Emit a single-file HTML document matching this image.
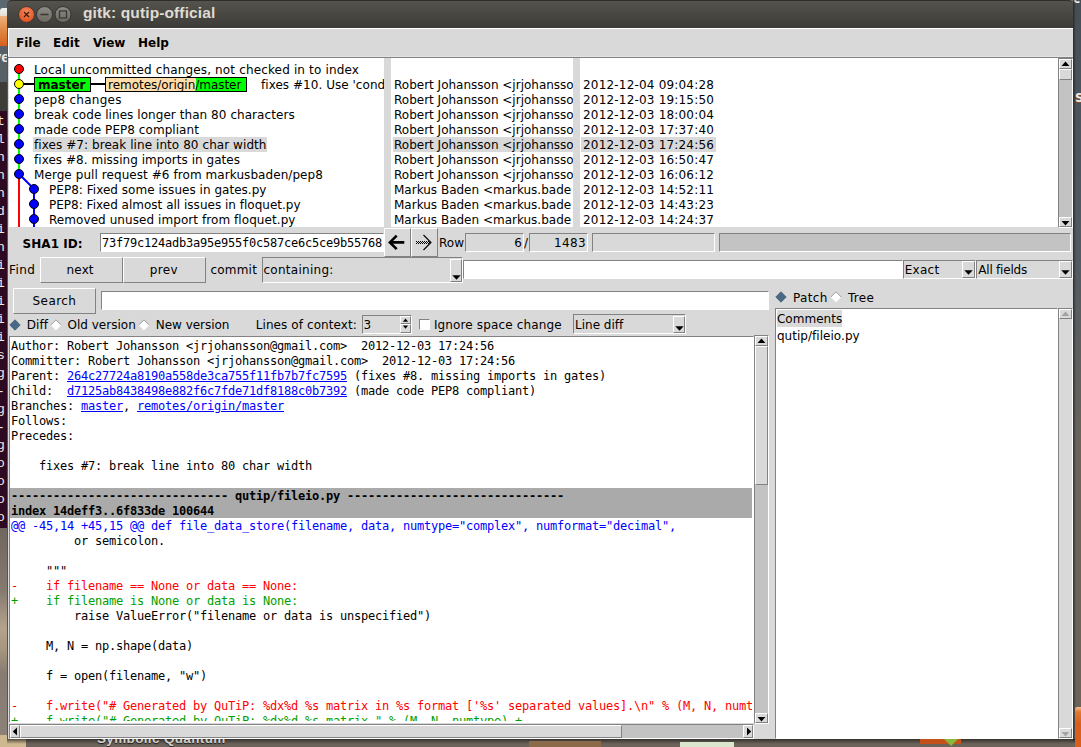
<!DOCTYPE html>
<html><head><meta charset="utf-8"><title>gitk: qutip-official</title>
<style>
html,body{margin:0;padding:0;}
body{width:1081px;height:747px;position:relative;overflow:hidden;background:#6b6257;font-family:"DejaVu Sans","Liberation Sans",sans-serif;font-size:12px;color:#000;}
.abs,#win *{position:absolute;box-sizing:border-box;white-space:pre;}
#win svg *{position:static;}
#win{position:absolute;left:7px;top:0;width:1066px;height:739px;overflow:hidden;}
#title{left:0;top:0;width:1066px;height:28px;background:linear-gradient(#55534d,#3c3b37);border-radius:5px 5px 0 0;border-top:1px solid #2f2e2b;}
#title .t{left:76px;top:3px;font:bold 15.5px "Liberation Sans",sans-serif;color:#dfdbd2;letter-spacing:0.12px;}
.ui{font:12px "DejaVu Sans","Liberation Sans",sans-serif;line-height:15px;height:15px;}
.b{font-weight:bold !important;}
.mono{font:12px "DejaVu Sans Mono","Liberation Mono",monospace;letter-spacing:-0.224px;line-height:15px;height:15px;}
.sunk{border:1px solid;border-color:#828282 #fff #fff #828282;}
.raised{border:1px solid;border-color:#fff #828282 #828282 #fff;background:#d9d9d9;}
.white{background:#fff;}
.c1{letter-spacing:0.15px;}
.c2{letter-spacing:0.0px;}
.c3{letter-spacing:0.19px;}
</style></head><body>
<div id="desk" style="position:absolute;left:0;top:0;width:1081px;height:747px;overflow:hidden;background:#6c645b;">
<div class="abs" style="left:0;top:0;width:14px;height:9px;background:#5b6872;"></div>
<div class="abs" style="left:0;top:8px;width:8px;height:8px;background:linear-gradient(#f2f2f2,#e4ddd6);border-radius:3px 0 0 0;"></div>
<div class="abs" style="left:0;top:16px;width:8px;height:30px;background:linear-gradient(#eeb27c,#e08a48 45%,#d8601e);"></div>
<div class="abs" style="left:0;top:46px;width:8px;height:36px;background:#586067;"></div>
<span class="abs" style="left:-7px;top:48px;font:bold 15px 'Liberation Sans',sans-serif;color:#e8e8e8;">ve</span>
<div class="abs" style="left:0;top:82px;width:8px;height:29px;background:#3d3c38;"></div>
<div class="abs" style="left:0;top:111px;width:8px;height:417px;background:#2d0922;"></div>
<div class="abs" style="left:0;top:528px;width:8px;height:208px;background:linear-gradient(#6f665e,#857a70 30%,#b3a28c 48%,#a8977f 58%,#877c72 70%,#8b8178);"></div>
<div class="abs" style="left:0;top:735px;width:26px;height:12px;background:#cdb88f;"></div>
<div class="abs term" style="left:0;top:111px;width:7px;height:417px;overflow:hidden;"><span class="abs" style="left:-3px;top:3px;font:13px 'Liberation Mono',monospace;color:#eeeeec;line-height:15px;">t</span><span class="abs" style="left:-3px;top:21px;font:13px 'Liberation Mono',monospace;color:#eeeeec;line-height:15px;">l</span><span class="abs" style="left:-3px;top:39px;font:13px 'Liberation Mono',monospace;color:#eeeeec;line-height:15px;">n</span><span class="abs" style="left:-3px;top:57px;font:13px 'Liberation Mono',monospace;color:#eeeeec;line-height:15px;">n</span><span class="abs" style="left:-3px;top:75px;font:13px 'Liberation Mono',monospace;color:#eeeeec;line-height:15px;">n</span><span class="abs" style="left:-3px;top:93px;font:13px 'Liberation Mono',monospace;color:#eeeeec;line-height:15px;">d</span><span class="abs" style="left:-3px;top:111px;font:13px 'Liberation Mono',monospace;color:#eeeeec;line-height:15px;">i</span><span class="abs" style="left:-3px;top:129px;font:13px 'Liberation Mono',monospace;color:#eeeeec;line-height:15px;">n</span><span class="abs" style="left:-3px;top:147px;font:13px 'Liberation Mono',monospace;color:#eeeeec;line-height:15px;">i</span><span class="abs" style="left:-3px;top:165px;font:13px 'Liberation Mono',monospace;color:#eeeeec;line-height:15px;">i</span><span class="abs" style="left:-3px;top:183px;font:13px 'Liberation Mono',monospace;color:#eeeeec;line-height:15px;">i</span><span class="abs" style="left:-3px;top:201px;font:13px 'Liberation Mono',monospace;color:#eeeeec;line-height:15px;">i</span><span class="abs" style="left:-3px;top:219px;font:13px 'Liberation Mono',monospace;color:#eeeeec;line-height:15px;">i</span><span class="abs" style="left:-3px;top:237px;font:13px 'Liberation Mono',monospace;color:#eeeeec;line-height:15px;">s</span><span class="abs" style="left:-3px;top:255px;font:13px 'Liberation Mono',monospace;color:#eeeeec;line-height:15px;">g</span><span class="abs" style="left:-3px;top:273px;font:13px 'Liberation Mono',monospace;color:#eeeeec;line-height:15px;">-</span><span class="abs" style="left:-3px;top:291px;font:13px 'Liberation Mono',monospace;color:#eeeeec;line-height:15px;">g</span><span class="abs" style="left:-3px;top:309px;font:13px 'Liberation Mono',monospace;color:#eeeeec;line-height:15px;">-</span><span class="abs" style="left:-3px;top:327px;font:13px 'Liberation Mono',monospace;color:#eeeeec;line-height:15px;">g</span><span class="abs" style="left:-3px;top:345px;font:13px 'Liberation Mono',monospace;color:#eeeeec;line-height:15px;">o</span><span class="abs" style="left:-3px;top:363px;font:13px 'Liberation Mono',monospace;color:#eeeeec;line-height:15px;">o</span><span class="abs" style="left:-3px;top:381px;font:13px 'Liberation Mono',monospace;color:#eeeeec;line-height:15px;">o</span><span class="abs" style="left:-3px;top:399px;font:13px 'Liberation Mono',monospace;color:#eeeeec;line-height:15px;">o</span></div>
<div class="abs" style="left:1073px;top:0;width:8px;height:747px;background:linear-gradient(#474f56,#525b62 35%,#6a645c 60%,#6c645b);"></div>
<span class="abs" style="left:1075px;top:91px;font:bold 12px 'DejaVu Sans',sans-serif;color:#ececec;text-shadow:-1px 1px 0 #8a4a1a;">S</span>
<span class="abs" style="left:1073px;top:-8px;font:bold 12px 'DejaVu Sans',sans-serif;color:#ececec;">c</span>
<div class="abs" style="left:1073px;top:0;width:3px;height:741px;background:linear-gradient(90deg,rgba(30,30,30,.75),rgba(30,30,30,0));"></div>
<div class="abs" style="left:1075px;top:707px;width:6px;height:40px;background:linear-gradient(#f6c090,#e07a34 12%,#d8601c 40%);border-radius:2px 0 0 0;"></div>
<div class="abs" style="left:7px;top:739px;width:1068px;height:5px;background:linear-gradient(rgba(30,28,26,.7),rgba(30,28,26,0));"></div>
<span class="abs" style="left:97px;top:731px;line-height:15px;font:bold 13.5px/15px 'Liberation Sans',sans-serif;color:#d2cdc6;text-shadow:0 1px 1px #1a1a1a;letter-spacing:0.35px;">Symbolic Quantum</span>
<div class="abs" style="left:529px;top:741px;width:72px;height:6px;background:#8a6a48;"></div>
<div class="abs" style="left:680px;top:742px;width:54px;height:5px;background:#dbe6cf;"></div>
<div class="abs" style="left:920px;top:739px;width:41px;height:5px;background:#c4511a;"></div>
<div class="abs" style="left:944px;top:739px;width:0;height:0;border-left:7px solid transparent;border-right:7px solid transparent;border-top:7px solid #8ab83a;"></div>
</div>
<div id="win">
<div id="title"><span class="t">gitk: qutip-official</span><svg style="left:9px;top:3px" width="70" height="22" viewBox="0 0 70 22"><defs><radialGradient id="rg" cx="50%" cy="35%" r="65%"><stop offset="0" stop-color="#f58a5c"/><stop offset="1" stop-color="#df4f1e"/></radialGradient><linearGradient id="gg" x1="0" y1="0" x2="0" y2="1"><stop offset="0" stop-color="#8e8c84"/><stop offset="1" stop-color="#6a6861"/></linearGradient></defs><circle cx="10.5" cy="10.5" r="8" fill="url(#rg)" stroke="#3a3935" stroke-width="1"/><path d="M8 8 L13 13 M13 8 L8 13" stroke="#3f1707" stroke-width="1.2" fill="none"/><circle cx="28.5" cy="10.5" r="8" fill="url(#gg)" stroke="#33322e" stroke-width="1"/><path d="M24.5 10.5 H32.5" stroke="#3a3935" stroke-width="1.6"/><circle cx="47" cy="10.5" r="8" fill="url(#gg)" stroke="#33322e" stroke-width="1"/><rect x="43.5" y="7" width="7" height="7" fill="none" stroke="#3a3935" stroke-width="1.3"/></svg></div>
<div class="" style="left:0px;top:28px;width:1066px;height:711px;background:#d9d9d9;"></div>
<div class="" style="left:0px;top:28px;width:1066px;height:29px;background:#d9d9d9;border-top:1px solid #fff;"></div>
<div class="" style="left:0px;top:28px;width:1px;height:711px;background:#55544f;"></div>
<div class="" style="left:1px;top:28px;width:1px;height:28px;background:#fff;"></div>
<div class="" style="left:1px;top:56px;width:1065px;height:1px;background:#e4e4e4;"></div>
<span class="ui b" style="left:9px;top:36px;">File</span>
<span class="ui b" style="left:46px;top:36px;">Edit</span>
<span class="ui b" style="left:86px;top:36px;">View</span>
<span class="ui b" style="left:131px;top:36px;">Help</span>
<div class="" style="left:1px;top:57px;width:1065px;height:1px;background:#828282;"></div>
<div class="white" style="left:2px;top:58px;width:375px;height:169px;"></div>
<div class="white" style="left:384px;top:58px;width:182px;height:169px;"></div>
<div class="white" style="left:573px;top:58px;width:478px;height:169px;"></div>
<div class="" style="left:26px;top:137px;width:234px;height:15px;background:#d9d9d9;"></div>
<div class="" style="left:386px;top:137px;width:181px;height:15px;background:#d9d9d9;"></div>
<div class="" style="left:574px;top:137px;width:135px;height:15px;background:#d9d9d9;"></div>
<svg style="left:3px;top:58px" width="60" height="169" viewBox="0 0 60 169"><path d="M9 11 V116" stroke="#00ff00" stroke-width="2" fill="none"/><path d="M9 116 V169" stroke="#ff0000" stroke-width="2" fill="none"/><path d="M9 116 L16.5 123.5 L24 131 V169" stroke="#0000ff" stroke-width="2" fill="none"/><path d="M9 26 H80" stroke="#000" stroke-width="2" fill="none"/><circle cx="9" cy="11" r="4.5" fill="#ff0000" stroke="#000" stroke-width="1"/><circle cx="9" cy="26" r="4.5" fill="#ffff00" stroke="#000" stroke-width="1"/><circle cx="9" cy="41" r="4.5" fill="#0000ff" stroke="#000" stroke-width="1"/><circle cx="9" cy="56" r="4.5" fill="#0000ff" stroke="#000" stroke-width="1"/><circle cx="9" cy="71" r="4.5" fill="#0000ff" stroke="#000" stroke-width="1"/><circle cx="9" cy="86" r="4.5" fill="#0000ff" stroke="#000" stroke-width="1"/><circle cx="9" cy="101" r="4.5" fill="#0000ff" stroke="#000" stroke-width="1"/><circle cx="9" cy="116" r="4.5" fill="#0000ff" stroke="#000" stroke-width="1"/><circle cx="24" cy="131" r="4.5" fill="#0000ff" stroke="#000" stroke-width="1"/><circle cx="24" cy="146" r="4.5" fill="#0000ff" stroke="#000" stroke-width="1"/><circle cx="24" cy="161" r="4.5" fill="#0000ff" stroke="#000" stroke-width="1"/></svg>
<span class="ui" style="left:27px;top:63px;letter-spacing:0.150px;">Local uncommitted changes, not checked in to index</span>
<span class="ui c2" style="left:387px;top:78px;">Robert Johansson &lt;jrjohansso</span>
<span class="ui c3" style="left:576px;top:78px;">2012-12-04 09:04:28</span>
<span class="ui" style="left:27px;top:93px;letter-spacing:0.270px;">pep8 changes</span>
<span class="ui c2" style="left:387px;top:93px;">Robert Johansson &lt;jrjohansso</span>
<span class="ui c3" style="left:576px;top:93px;">2012-12-03 19:15:50</span>
<span class="ui" style="left:27px;top:108px;letter-spacing:0.060px;">break code lines longer than 80 characters</span>
<span class="ui c2" style="left:387px;top:108px;">Robert Johansson &lt;jrjohansso</span>
<span class="ui c3" style="left:576px;top:108px;">2012-12-03 18:00:04</span>
<span class="ui" style="left:27px;top:123px;letter-spacing:0.050px;">made code PEP8 compliant</span>
<span class="ui c2" style="left:387px;top:123px;">Robert Johansson &lt;jrjohansso</span>
<span class="ui c3" style="left:576px;top:123px;">2012-12-03 17:37:40</span>
<span class="ui" style="left:27px;top:138px;letter-spacing:0.070px;">fixes #7: break line into 80 char width</span>
<span class="ui c2" style="left:387px;top:138px;">Robert Johansson &lt;jrjohansso</span>
<span class="ui c3" style="left:576px;top:138px;">2012-12-03 17:24:56</span>
<span class="ui" style="left:27px;top:153px;letter-spacing:0.040px;">fixes #8. missing imports in gates</span>
<span class="ui c2" style="left:387px;top:153px;">Robert Johansson &lt;jrjohansso</span>
<span class="ui c3" style="left:576px;top:153px;">2012-12-03 16:50:47</span>
<span class="ui" style="left:27px;top:168px;letter-spacing:0.070px;">Merge pull request #6 from markusbaden/pep8</span>
<span class="ui c2" style="left:387px;top:168px;">Robert Johansson &lt;jrjohansso</span>
<span class="ui c3" style="left:576px;top:168px;">2012-12-03 16:06:12</span>
<span class="ui" style="left:42px;top:183px;letter-spacing:0.030px;">PEP8: Fixed some issues in gates.py</span>
<span class="ui c2" style="left:387px;top:183px;">Markus Baden &lt;markus.bade</span>
<span class="ui c3" style="left:576px;top:183px;">2012-12-03 14:52:11</span>
<span class="ui" style="left:42px;top:198px;letter-spacing:0.010px;">PEP8: Fixed almost all issues in floquet.py</span>
<span class="ui c2" style="left:387px;top:198px;">Markus Baden &lt;markus.bade</span>
<span class="ui c3" style="left:576px;top:198px;">2012-12-03 14:43:23</span>
<span class="ui" style="left:42px;top:213px;letter-spacing:0.070px;">Removed unused import from floquet.py</span>
<span class="ui c2" style="left:387px;top:213px;">Markus Baden &lt;markus.bade</span>
<span class="ui c3" style="left:576px;top:213px;">2012-12-03 14:24:37</span>
<div class="" style="left:27px;top:77px;width:57px;height:15px;background:#00ff00;border:1px solid #000;"></div>
<span class="ui b" style="left:31px;top:78px;">master</span>
<div class="" style="left:84px;top:83px;width:14px;height:2px;background:#000;"></div>
<div class="" style="left:98px;top:77px;width:142px;height:15px;background:#ffddaa;border:1px solid #000;"></div>
<div class="" style="left:189px;top:78px;width:50px;height:13px;background:#00ff00;"></div>
<span class="ui" style="left:101px;top:78px;letter-spacing:-0.03px;">remotes/origin/master</span>
<span class="ui" style="left:254px;top:78px;letter-spacing:0.04px;">fixes #10. Use &#x27;cond</span>
<div class="" style="left:377px;top:58px;width:7px;height:170px;background:#d9d9d9;"></div>
<div class="" style="left:566px;top:58px;width:7px;height:170px;background:#d9d9d9;"></div>
<div class="sunk" style="left:1051px;top:58px;width:15px;height:170px;background:#c3c3c3;"></div>
<div class="raised" style="left:1052px;top:59px;width:13px;height:10px;"></div>
<div class="raised" style="left:1052px;top:217px;width:13px;height:10px;"></div>
<div class="raised" style="left:1052px;top:69px;width:13px;height:11px;"></div>
<svg style="left:1054px;top:61px" width="9" height="6"><path d="M0.6 5 L4.5 0.6 L8.4 5 Z" fill="#000"/></svg>
<svg style="left:1054px;top:220px" width="9" height="6"><path d="M0.6 1 L4.5 5.4 L8.4 1 Z" fill="#000"/></svg><span class="ui b" style="left:15.600000000000001px;top:237px;letter-spacing:0.03px;">SHA1 ID:</span>
<div class="sunk white" style="left:93px;top:233px;width:284px;height:19px;"></div>
<span class="mono" style="left:95px;top:236px;">73f79c124adb3a95e955f0c587ce6c5ce9b55768</span>
<div class="raised" style="left:377px;top:228px;width:27px;height:29px;"></div>
<div class="raised" style="left:404px;top:228px;width:27px;height:29px;"></div>
<svg style="left:380px;top:232px" width="22" height="20" viewBox="0 0 22 20"><path d="M2.9 10.4 H17.3 M9.7 3.6 L2.9 10.4 L9.7 17.2" stroke="#000" stroke-width="2.6" fill="none" stroke-linejoin="miter"/></svg>
<svg style="left:407px;top:232px" width="22" height="20" viewBox="0 0 22 20"><path d="M2 9.5 H15 M3 10.5 H16 M2 11.5 H15" stroke="#000" stroke-width="1" fill="none" stroke-dasharray="1 1"/><path d="M9.5 3 L17 10.5 L9.5 18" stroke="#000" stroke-width="1.1" fill="none"/></svg>
<span class="ui" style="left:432px;top:236px;">Row</span>
<div class="sunk" style="left:458px;top:233px;width:59px;height:19px;"></div>
<span class="ui" style="left:458px;top:236px;width:57px;text-align:right;">6</span>
<span class="ui" style="left:517px;top:236px;">/</span>
<div class="sunk" style="left:522px;top:233px;width:59px;height:19px;"></div>
<span class="ui" style="left:522px;top:236px;width:57px;text-align:right;letter-spacing:0.35px;">1483</span>
<div class="sunk" style="left:585px;top:233px;width:123px;height:19px;"></div>
<div class="sunk" style="left:712px;top:233px;width:352px;height:19px;background:#c3c3c3;"></div>
<span class="ui" style="left:2px;top:263px;letter-spacing:0.40px;">Find</span>
<div class="raised" style="left:33px;top:257px;width:83px;height:26px;"></div>
<span class="ui" style="left:59.599999999999994px;top:263px;letter-spacing:0.13px;">next</span>
<div class="raised" style="left:116px;top:257px;width:83px;height:26px;"></div>
<span class="ui" style="left:142.7px;top:263px;letter-spacing:0.35px;">prev</span>
<span class="ui" style="left:203.4px;top:263px;letter-spacing:0.22px;">commit</span>
<div class="sunk" style="left:255px;top:257px;width:201px;height:26px;"></div>
<span class="ui" style="left:256.5px;top:263px;letter-spacing:0.27px;">containing:</span>
<div class="raised" style="left:443px;top:259px;width:12px;height:23px;"></div>
<svg style="left:445px;top:275px" width="9" height="5" viewBox="0 0 9 5"><path d="M0.3 0.3 H8.7 L4.5 4.8 Z" fill="#000"/></svg>
<div class="sunk white" style="left:456px;top:260px;width:440px;height:19px;"></div>
<div class="sunk" style="left:896px;top:260px;width:73px;height:19px;"></div>
<span class="ui" style="left:897.7px;top:263px;letter-spacing:0.30px;">Exact</span>
<div class="raised" style="left:955px;top:261px;width:13px;height:17px;"></div>
<svg style="left:957px;top:270px" width="9" height="5" viewBox="0 0 9 5"><path d="M0.3 0.3 H8.7 L4.5 4.8 Z" fill="#000"/></svg>
<div class="sunk" style="left:969px;top:260px;width:97px;height:19px;"></div>
<span class="ui" style="left:971.3px;top:263px;letter-spacing:-0.22px;">All fields</span>
<div class="raised" style="left:1052px;top:261px;width:13px;height:17px;"></div>
<svg style="left:1054px;top:270px" width="9" height="5" viewBox="0 0 9 5"><path d="M0.3 0.3 H8.7 L4.5 4.8 Z" fill="#000"/></svg>
<div class="raised" style="left:6px;top:288px;width:83px;height:26px;"></div>
<span class="ui" style="left:25.6px;top:294px;letter-spacing:0.40px;">Search</span>
<div class="sunk white" style="left:94px;top:291px;width:668px;height:19px;"></div>
<svg style="left:768.2px;top:291.3px" width="12" height="12" viewBox="0 0 12 12"><path d="M6 0.8 L11.2 6 L6 11.2 L0.8 6 Z" fill="#4a6984" stroke="#3f5a73" stroke-width="0.8"/></svg>
<span class="ui" style="left:786px;top:291px;letter-spacing:0.35px;">Patch</span>
<svg style="left:823.0px;top:291.3px" width="12" height="12" viewBox="0 0 12 12"><path d="M6 0.8 L11.2 6 L6 11.2 L0.8 6 Z" fill="#ffffff"/><path d="M0.8 6 L6 0.8 L11.2 6" fill="none" stroke="#9a9a9a" stroke-width="1"/><path d="M0.8 6 L6 11.2 L11.2 6" fill="none" stroke="#f4f4f4" stroke-width="1"/></svg>
<span class="ui" style="left:841px;top:291px;letter-spacing:0.30px;">Tree</span>
<svg style="left:2.3px;top:318.5px" width="12" height="12" viewBox="0 0 12 12"><path d="M6 0.8 L11.2 6 L6 11.2 L0.8 6 Z" fill="#4a6984" stroke="#3f5a73" stroke-width="0.8"/></svg>
<span class="ui" style="left:19.8px;top:318px;letter-spacing:0.07px;">Diff</span>
<svg style="left:43.3px;top:318.5px" width="12" height="12" viewBox="0 0 12 12"><path d="M6 0.8 L11.2 6 L6 11.2 L0.8 6 Z" fill="#ffffff"/><path d="M0.8 6 L6 0.8 L11.2 6" fill="none" stroke="#9a9a9a" stroke-width="1"/><path d="M0.8 6 L6 11.2 L11.2 6" fill="none" stroke="#f4f4f4" stroke-width="1"/></svg>
<span class="ui" style="left:60.5px;top:318px;letter-spacing:0.01px;">Old version</span>
<svg style="left:131.2px;top:318.5px" width="12" height="12" viewBox="0 0 12 12"><path d="M6 0.8 L11.2 6 L6 11.2 L0.8 6 Z" fill="#ffffff"/><path d="M0.8 6 L6 0.8 L11.2 6" fill="none" stroke="#9a9a9a" stroke-width="1"/><path d="M0.8 6 L6 11.2 L11.2 6" fill="none" stroke="#f4f4f4" stroke-width="1"/></svg>
<span class="ui" style="left:148.8px;top:318px;letter-spacing:-0.03px;">New version</span>
<span class="ui" style="left:248.7px;top:318px;letter-spacing:0.09px;">Lines of context:</span>
<div class="sunk" style="left:355px;top:315px;width:50px;height:19px;"></div>
<span class="ui" style="left:356.6px;top:318px;">3</span>
<div class="raised" style="left:393px;top:316px;width:11px;height:8px;"></div>
<div class="raised" style="left:393px;top:324px;width:11px;height:9px;"></div>
<svg style="left:395px;top:318px" width="7" height="5"><path d="M0.9 3.8 L3.5 0.6 L6.1 3.8 Z" fill="#000"/></svg>
<svg style="left:395px;top:325px" width="7" height="5"><path d="M0.9 0.6 L3.5 3.8 L6.1 0.6 Z" fill="#000"/></svg>
<div class="sunk white" style="left:412px;top:319px;width:11px;height:11px;"></div>
<span class="ui" style="left:426.9px;top:318px;letter-spacing:0.14px;">Ignore space change</span>
<div class="sunk" style="left:566px;top:314px;width:113px;height:20px;"></div>
<span class="ui" style="left:568.1px;top:318px;letter-spacing:-0.02px;">Line diff</span>
<div class="raised" style="left:666px;top:316px;width:12px;height:17px;"></div>
<svg style="left:667.5px;top:326px" width="9" height="5" viewBox="0 0 9 5"><path d="M0.3 0.3 H8.7 L4.5 4.8 Z" fill="#000"/></svg><div class="sunk white" style="left:2px;top:336px;width:745px;height:387px;"></div>
<div class="" style="left:3px;top:488px;width:742px;height:30px;background:#aaaaaa;"></div>
<div style="left:3px;top:337px;width:742px;height:384px;overflow:hidden;"><span class="mono" style="left:1px;top:2px;color:#000;">Author: Robert Johansson &lt;jrjohansson@gmail.com&gt;  2012-12-03 17:24:56</span>
<span class="mono" style="left:1px;top:17px;color:#000;">Committer: Robert Johansson &lt;jrjohansson@gmail.com&gt;  2012-12-03 17:24:56</span>
<span class="mono" style="left:1px;top:32px;color:#000;">Parent: <span style="position:static;color:#0000ff;text-decoration:underline">264c27724a8190a558de3ca755f11fb7b7fc7595</span> (fixes #8. missing imports in gates)</span>
<span class="mono" style="left:1px;top:47px;color:#000;">Child:  <span style="position:static;color:#0000ff;text-decoration:underline">d7125ab8438498e882f6c7fde71df8188c0b7392</span> (made code PEP8 compliant)</span>
<span class="mono" style="left:1px;top:62px;color:#000;">Branches: <span style="position:static;color:#0000ff;text-decoration:underline">master</span>, <span style="position:static;color:#0000ff;text-decoration:underline">remotes/origin/master</span></span>
<span class="mono" style="left:1px;top:77px;color:#000;">Follows: </span>
<span class="mono" style="left:1px;top:92px;color:#000;">Precedes: </span>
<span class="mono" style="left:1px;top:122px;color:#000;">    fixes #7: break line into 80 char width</span>
<span class="mono" style="left:1px;top:152px;color:#000;font-weight:bold;">------------------------------- qutip/fileio.py -------------------------------</span>
<span class="mono" style="left:1px;top:167px;color:#000;font-weight:bold;">index 14deff3..6f833de 100644</span>
<span class="mono" style="left:1px;top:182px;color:#0000ff;">@@ -45,14 +45,15 @@ def file_data_store(filename, data, numtype=&quot;complex&quot;, numformat=&quot;decimal&quot;,</span>
<span class="mono" style="left:1px;top:197px;color:#000;">         or semicolon.</span>
<span class="mono" style="left:1px;top:227px;color:#000;">     &quot;&quot;&quot;</span>
<span class="mono" style="left:1px;top:242px;color:#ff0000;">-    if filename == None or data == None:</span>
<span class="mono" style="left:1px;top:257px;color:#00a000;">+    if filename is None or data is None:</span>
<span class="mono" style="left:1px;top:272px;color:#000;">         raise ValueError(&quot;filename or data is unspecified&quot;)</span>
<span class="mono" style="left:1px;top:302px;color:#000;">     M, N = np.shape(data)</span>
<span class="mono" style="left:1px;top:332px;color:#000;">     f = open(filename, &quot;w&quot;)</span>
<span class="mono" style="left:1px;top:362px;color:#ff0000;">-    f.write(&quot;# Generated by QuTiP: %dx%d %s matrix in %s format [&#x27;%s&#x27; separated values].\n&quot; % (M, N, numtype, numformat, sep))</span>
<span class="mono" style="left:1px;top:377px;color:#00a000;">+    f.write(&quot;# Generated by QuTiP: %dx%d %s matrix &quot; % (M, N, numtype) +</span></div>
<div class="sunk" style="left:747px;top:335px;width:15px;height:389px;background:#c3c3c3;"></div>
<div class="raised" style="left:748px;top:336px;width:13px;height:10px;"></div>
<div class="raised" style="left:748px;top:713px;width:13px;height:10px;"></div>
<div class="raised" style="left:748px;top:346px;width:13px;height:139px;"></div>
<svg style="left:750px;top:338px" width="9" height="6"><path d="M0.6 5 L4.5 0.6 L8.4 5 Z" fill="#000"/></svg>
<svg style="left:750px;top:716px" width="9" height="6"><path d="M0.6 1 L4.5 5.4 L8.4 1 Z" fill="#000"/></svg>
<div class="sunk" style="left:2px;top:724px;width:745px;height:15px;background:#c3c3c3;"></div>
<div class="raised" style="left:13px;top:725px;width:602px;height:13px;"></div>
<div class="raised" style="left:3px;top:725px;width:10px;height:13px;"></div>
<div class="raised" style="left:736px;top:725px;width:10px;height:13px;"></div>
<svg style="left:5px;top:727px" width="6" height="9"><path d="M5 0.6 L0.8 4.5 L5 8.4 Z" fill="#000"/></svg>
<svg style="left:739px;top:727px" width="6" height="9"><path d="M1 0.6 L5.2 4.5 L1 8.4 Z" fill="#000"/></svg>
<div class="sunk white" style="left:768px;top:308px;width:283px;height:431px;"></div>
<div class="" style="left:770px;top:310px;width:65px;height:17px;background:#d9d9d9;"></div>
<span class="ui" style="left:769.9px;top:312px;letter-spacing:0.04px;">Comments</span>
<span class="ui" style="left:769.9px;top:329px;letter-spacing:0.04px;">qutip/fileio.py</span>
<div class="sunk" style="left:1051px;top:308px;width:15px;height:431px;background:#d9d9d9;"></div>
<div class="raised" style="left:1052px;top:309px;width:13px;height:10px;"></div>
<div class="raised" style="left:1052px;top:728px;width:13px;height:10px;"></div>
<svg style="left:1054px;top:311px" width="9" height="6"><path d="M0.6 5 L4.5 0.6 L8.4 5 Z" fill="#a3a3a3"/></svg>
<svg style="left:1054px;top:731px" width="9" height="6"><path d="M0.6 1 L4.5 5.4 L8.4 1 Z" fill="#a3a3a3"/></svg></div></body></html>
